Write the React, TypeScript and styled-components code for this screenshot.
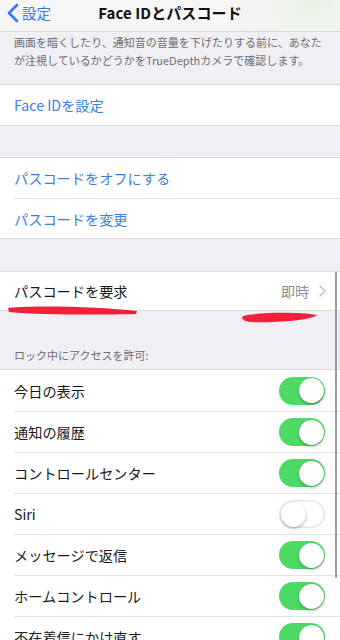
import React from "react";
import styled, { createGlobalStyle } from "styled-components";

const Global = createGlobalStyle`
  html, body { margin: 0; padding: 0; background: #efeff4; }
  body { font-family: "Noto Sans CJK JP", "Noto Sans", sans-serif; -webkit-font-smoothing: antialiased; }
  * { box-sizing: border-box; }
`;

const Page = styled.div`
  position: relative;
  width: 340px;
  height: 640px;
  overflow: hidden;
  background: #efeff4;
`;

const NavBar = styled.div`
  height: 32px;
  display: grid;
  grid-template-columns: 80px 1fr 80px;
  align-items: center;
  background: radial-gradient(circle at 310px 0px, #e9f2e6 0, #f1f4ef 40px, #f6f6f6 90px);
  border-bottom: 1px solid #d6d6da;
`;

const Back = styled.div`
  display: flex;
  align-items: center;
  gap: 3px;
  padding-left: 7px;
  color: #2f7cf6;
  font-size: 14.5px;
  margin-top: -6px;
`;

const Title = styled.div`
  text-align: center;
  font-weight: 700;
  font-size: 15px;
  color: #111;
  letter-spacing: 0.1px;
  margin-top: -6px;
  white-space: nowrap;
`;

const Description = styled.div`
  padding: 1px 14px 0 14px;
  height: 52px;
  font-size: 11px;
  line-height: 18px;
  color: #6d6d72;
  letter-spacing: 0.02px;
`;

const Group = styled.div<{ $mt?: number }>`
  background: #fff;
  margin-top: ${(p) => p.$mt ?? 0}px;
  border-top: 1px solid #dcdce0;
  border-bottom: 1px solid #dcdce0;
`;

const Row = styled.div<{ $h?: number }>`
  height: ${(p) => p.$h ?? 40}px;
  margin-left: 14px;
  padding-right: 14px;
  display: flex;
  align-items: center;
  justify-content: space-between;
  & + & { border-top: 1px solid #e3e3e7; }
`;

const Label = styled.span<{ $blue?: boolean }>`
  font-size: 14.2px;
  color: ${(p) => (p.$blue ? "#3a7fe0" : "#1a1a1a")};
  white-space: nowrap;
`;

const Detail = styled.div`
  display: flex;
  align-items: center;
  gap: 10px;
  color: #8e8e93;
  font-size: 14px;
  margin-right: 0px;
`;

const SectionHeader = styled.div`
  height: 58px;
  padding: 0 14px 6px;
  display: flex;
  align-items: flex-end;
  font-size: 11px;
  color: #6d6d72;
`;

const Track = styled.div<{ $on: boolean }>`
  position: relative;
  width: 46px;
  height: 28px;
  border-radius: 14px;
  background: ${(p) => (p.$on ? "#4cd964" : "#fff")};
  box-shadow: ${(p) => (p.$on ? "none" : "inset 0 0 0 1.5px #e5e5ea")};
  margin-right: 1px;
`;

const Knob = styled.div<{ $on: boolean }>`
  position: absolute;
  top: 1.5px;
  left: ${(p) => (p.$on ? "19.5px" : "1.5px")};
  width: 25px;
  height: 25px;
  border-radius: 50%;
  background: #fff;
  box-shadow: 0 2px 3px rgba(0, 0, 0, 0.22), 0 0 0 0.5px rgba(0, 0, 0, 0.08);
`;

const Overlay = styled.svg`
  position: absolute;
  left: 0;
  top: 300px;
  pointer-events: none;
`;

const ScrollBar = styled.div`
  position: absolute;
  right: 3px;
  top: 272px;
  width: 2.5px;
  height: 306px;
  border-radius: 2px;
  background: #9a9a9e;
`;

const Toggle = ({ on }: { on: boolean }) => (
  <Track $on={on}>
    <Knob $on={on} />
  </Track>
);

const toggles: [string, boolean][] = [
  ["今日の表示", true],
  ["通知の履歴", true],
  ["コントロールセンター", true],
  ["Siri", false],
  ["メッセージで返信", true],
  ["ホームコントロール", true],
  ["不在着信にかけ直す", true],
];

export default function App() {
  return (
    <Page>
      <Global />
      <NavBar>
        <Back>
          <svg width="12" height="20" viewBox="0 0 12 20">
            <path d="M10 2 L2 10 L10 18" fill="none" stroke="#2f7cf6" strokeWidth="2.6" strokeLinecap="round" strokeLinejoin="round" />
          </svg>
          <span>設定</span>
        </Back>
        <Title>Face IDとパスコード</Title>
        <div />
      </NavBar>
      <Description>
        画面を暗くしたり、通知音の音量を下げたりする前に、あなたが注視しているかどうかをTrueDepthカメラで確認します。
      </Description>
      <Group>
        <Row $h={40}>
          <Label $blue>Face IDを設定</Label>
        </Row>
      </Group>
      <Group $mt={31}>
        <Row>
          <Label $blue>パスコードをオフにする</Label>
        </Row>
        <Row>
          <Label $blue>パスコードを変更</Label>
        </Row>
      </Group>
      <Group $mt={32}>
        <Row $h={38}>
          <Label>パスコードを要求</Label>
          <Detail>
            <span>即時</span>
            <svg width="7" height="12" viewBox="0 0 7 12">
              <path d="M1 1 L6 6 L1 11" fill="none" stroke="#c4c4c8" strokeWidth="1.6" strokeLinecap="round" strokeLinejoin="round" />
            </svg>
          </Detail>
        </Row>
      </Group>
      <SectionHeader>ロック中にアクセスを許可:</SectionHeader>
      <Group>
        {toggles.map(([label, on]) => (
          <Row key={label} $h={41}>
            <Label>{label}</Label>
            <Toggle on={on} />
          </Row>
        ))}
      </Group>
      <Overlay width="340" height="30" viewBox="0 0 340 30">
        <path d="M8 8 C 40 5, 100 7, 137 11 L 136 14 C 100 15, 40 15, 9 12 Z" fill="#f2213b" />
        <path d="M243 16 C 260 12, 300 12, 317 15 C 310 21, 270 23, 250 22 C 242 21, 241 18, 243 16 Z" fill="#f2213b" />
      </Overlay>
      <ScrollBar />
    </Page>
  );
}
